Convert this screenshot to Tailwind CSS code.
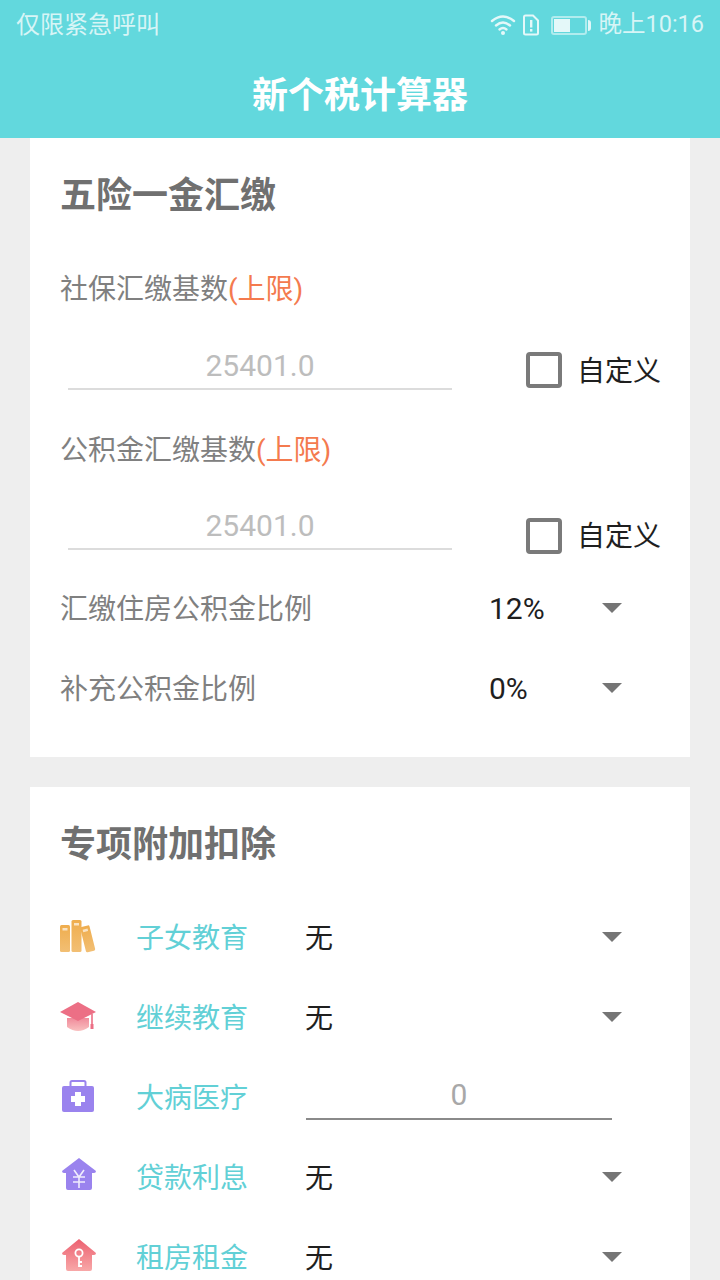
<!DOCTYPE html>
<html lang="zh">
<head>
  <meta charset="UTF-8">
  <title>新个税计算器</title>
  <script src="https://cdn.jsdelivr.net/npm/@tailwindcss/browser@4"></script>
</head>
<body class="w-[720px] h-[1280px] overflow-hidden bg-[#eeeeee] font-['Roboto','Noto_Sans_CJK_SC',sans-serif]">
  <!-- status bar + title -->
  <div class="bg-[#62d8dd] h-[138px] text-white">
    <div class="h-[50px] flex items-center justify-between pl-4 pr-4 text-[24px] text-white/75">
      <span>仅限紧急呼叫</span>
      <div class="flex items-center">
        <svg width="26" height="22" viewBox="0 0 26 22" fill="none" stroke="#e4f8f9" stroke-width="2.4" stroke-linecap="round">
          <path d="M2 7 Q13 -2 24 7"/><path d="M6 11.5 Q13 5.5 20 11.5"/><path d="M9.5 15.5 Q13 12.5 16.5 15.5"/>
          <circle cx="13" cy="19" r="2" fill="#e4f8f9" stroke="none"/>
        </svg>
        <svg class="ml-[6px]" width="18" height="22" viewBox="0 0 18 22" fill="none">
          <path d="M2 3 a1.5 1.5 0 0 1 1.5 -1.5 H11 L16 6.5 V19 a1.5 1.5 0 0 1 -1.5 1.5 H3.5 A1.5 1.5 0 0 1 2 19 Z" stroke="#e4f8f9" stroke-width="2"/>
          <rect x="8" y="6" width="2.4" height="7.5" fill="#e4f8f9"/><rect x="8" y="15" width="2.4" height="2.6" fill="#e4f8f9"/>
        </svg>
        <div class="ml-[11px] flex items-center">
          <div class="w-[36px] h-[19px] border-2 border-white/50 rounded-[3px] p-[1px]">
            <div class="w-[16px] h-full bg-[#e4f8f9]"></div>
          </div>
          <div class="w-[3px] h-[11px] bg-white/80 ml-[1px] rounded-r-sm"></div>
        </div>
        <span class="ml-[7px] text-[23.5px]">晚上10:16</span>
      </div>
    </div>
    <div class="h-[88px] flex items-center justify-center pt-[4px] text-[36px] font-bold">新个税计算器</div>
  </div>

  <div class="px-[30px]">
    <!-- card 1 -->
    <div class="bg-white h-[619px] pl-[31px] pr-[30px] pt-[34px]">
      <h2 class="h-[46px] text-[36px] leading-[48px] font-bold text-[#707070] -ml-[1px]">五险一金汇缴</h2>
      <div class="mt-[52px] h-[36px] leading-[40px] text-[28px] text-[#808080] -ml-[1px]">社保汇缴基数<span class="text-[#f47a4e]">(上限)</span></div>
      <div class="flex items-start h-[125px]">
        <div class="shrink-0 mt-[32px] ml-[7px] w-[384px] h-[52px] border-b-2 border-[#dcdcdc] text-center text-[30px] leading-[56px] text-[#bdbdbd]">25401.0</div>
        <div class="shrink-0 ml-[74px] mt-[46px] w-[36px] h-[36px] border-[4px] border-[#7a7a7a] rounded-[4px]"></div>
        <span class="ml-[15px] mt-[46px] text-[28px] leading-[40px] text-[#1f1f1f] whitespace-nowrap">自定义</span>
      </div>
      <div class="h-[36px] leading-[40px] text-[28px] text-[#808080] -ml-[1px]">公积金汇缴基数<span class="text-[#f47a4e]">(上限)</span></div>
      <div class="flex items-start h-[121px]">
        <div class="shrink-0 mt-[31px] ml-[7px] w-[384px] h-[52px] border-b-2 border-[#dcdcdc] text-center text-[30px] leading-[56px] text-[#bdbdbd]">25401.0</div>
        <div class="shrink-0 ml-[74px] mt-[51px] w-[36px] h-[36px] border-[4px] border-[#7a7a7a] rounded-[4px]"></div>
        <span class="ml-[15px] mt-[50px] text-[28px] leading-[40px] text-[#1f1f1f] whitespace-nowrap">自定义</span>
      </div>
      <div class="flex items-center h-[40px]">
        <span class="w-[428px] mt-[3px] -ml-[1px] mr-[1px] text-[28px] text-[#808080]">汇缴住房公积金比例</span>
        <span class="w-[113px] text-[30px] text-[#1f1f1f]">12%</span>
        <div class="w-0 h-0 border-x-[10px] border-x-transparent border-t-[10px] border-t-[#757575]"></div>
      </div>
      <div class="flex items-center h-[40px] mt-[40px]">
        <span class="w-[428px] mt-[3px] -ml-[1px] mr-[1px] text-[28px] text-[#808080]">补充公积金比例</span>
        <span class="w-[113px] text-[30px] text-[#1f1f1f]">0%</span>
        <div class="w-0 h-0 border-x-[10px] border-x-transparent border-t-[10px] border-t-[#757575]"></div>
      </div>
    </div>

    <!-- card 2 -->
    <div class="bg-white mt-[30px] h-[493px] pl-[31px] pr-[30px] pt-[34px]">
      <h2 class="h-[46px] text-[36px] leading-[48px] font-bold text-[#707070] -ml-[1px]">专项附加扣除</h2>
      <div class="mt-[50px] flex flex-col gap-[40px]">
        <div class="flex items-center h-[40px]">
          <svg class="w-[36px] h-[36px] shrink-0 -ml-[1px] -mt-[3px]" viewBox="0 0 36 36">
            <defs><linearGradient id="g1" x1="0" y1="0" x2="0" y2="1"><stop offset="0" stop-color="#efad4e"/><stop offset="1" stop-color="#f2bf74"/></linearGradient></defs>
            <rect x="0" y="7" width="10" height="27" rx="1.5" fill="url(#g1)"/><rect x="11.5" y="2" width="10" height="32" rx="1.5" fill="url(#g1)"/>
            <rect x="23" y="8" width="9.5" height="26" rx="1.5" fill="url(#g1)" transform="rotate(-14 27 21)"/>
            <rect x="2.5" y="10" width="5" height="2.5" fill="#fff" opacity=".65"/><rect x="14" y="5" width="5" height="2.5" fill="#fff" opacity=".65"/><rect x="25" y="11" width="5" height="2.5" fill="#fff" opacity=".65" transform="rotate(-14 27 21)"/>
          </svg>
          <span class="ml-[40px] w-[169px] mt-[3px] text-[28px] text-[#62d0d6]">子女教育</span>
          <span class="w-[297px] mt-[3px] text-[28px] text-[#1f1f1f]">无</span>
          <div class="w-0 h-0 border-x-[10px] border-x-transparent border-t-[10px] border-t-[#757575]"></div>
        </div>
        <div class="flex items-center h-[40px]">
          <svg class="w-[36px] h-[36px] shrink-0 -ml-[1px] mt-[1px]" viewBox="0 0 36 36">
            <defs><linearGradient id="g3" x1="0" y1="0" x2="0" y2="1"><stop offset="0" stop-color="#f08a9a"/><stop offset="1" stop-color="#f9c0c0"/></linearGradient></defs>
            <path d="M7 18 V27 Q18 35 29 27 V18 Z" fill="url(#g3)"/>
            <path d="M0 12 L18 2 L36 12 L18 21 Z" fill="#ec6f85"/>
            <path d="M32 14 V25" stroke="#ec6f85" stroke-width="1.6"/><rect x="30.5" y="24" width="3" height="5" fill="#ec6f85"/>
          </svg>
          <span class="ml-[40px] w-[169px] mt-[3px] text-[28px] text-[#62d0d6]">继续教育</span>
          <span class="w-[297px] mt-[3px] text-[28px] text-[#1f1f1f]">无</span>
          <div class="w-0 h-0 border-x-[10px] border-x-transparent border-t-[10px] border-t-[#757575]"></div>
        </div>
        <div class="flex items-center h-[40px]">
          <svg class="w-[34px] h-[34px] shrink-0 -mt-[2px]" viewBox="0 0 34 34">
            <path d="M9.5 7 V3.5 A1.5 1.5 0 0 1 11 2 H23 A1.5 1.5 0 0 1 24.5 3.5 V7" fill="none" stroke="#9a83ee" stroke-width="2"/>
            <rect x="1" y="7" width="32" height="26" rx="2" fill="#9a83ee"/>
            <path d="M14 13 H20 V17 H24 V23 H20 V27 H14 V23 H10 V17 H14 Z" fill="#fff"/>
          </svg>
          <span class="ml-[41px] w-[170px] mt-[3px] text-[28px] text-[#62d0d6]">大病医疗</span>
          <div class="shrink-0 self-start w-[306px] h-[43px] border-b-2 border-[#8a8a8a] text-center text-[30px] leading-[36px] text-[#a8a8a8]">0</div>
        </div>
        <div class="flex items-center h-[40px]">
          <svg class="w-[36px] h-[36px] shrink-0 -mt-[4px]" viewBox="0 0 36 36">
            <path d="M18 1 L35 14 Q35 16 33 16 H31 V31 A2 2 0 0 1 29 33 H7 A2 2 0 0 1 5 31 V16 H3 Q1 16 1 14 Z" fill="#9a83ee"/>
            <path d="M13 13 L18 20 L23 13 M12 20 H24 M12 25 H24 M18 20 V31" fill="none" stroke="#fff" stroke-width="1.6" opacity=".85"/>
          </svg>
          <span class="ml-[39px] w-[169px] mt-[3px] text-[28px] text-[#62d0d6]">贷款利息</span>
          <span class="w-[297px] mt-[3px] text-[28px] text-[#1f1f1f]">无</span>
          <div class="w-0 h-0 border-x-[10px] border-x-transparent border-t-[10px] border-t-[#757575]"></div>
        </div>
        <div class="flex items-center h-[40px]">
          <svg class="w-[36px] h-[36px] shrink-0 -mt-[2px]" viewBox="0 0 36 36">
            <defs><linearGradient id="g2" x1="0" y1="0" x2="0" y2="1"><stop offset="0" stop-color="#ec6070"/><stop offset="1" stop-color="#f8a8a8"/></linearGradient></defs>
            <path d="M18 1 L35 15 Q35 17 33 17 H31 V31 A2 2 0 0 1 29 33 H7 A2 2 0 0 1 5 31 V17 H3 Q1 17 1 15 Z" fill="url(#g2)"/>
            <circle cx="18" cy="15" r="3.6" fill="none" stroke="#fff" stroke-width="1.8"/>
            <path d="M18 19 V29 M18 24 H21 M18 28 H21" fill="none" stroke="#fff" stroke-width="1.8"/>
          </svg>
          <span class="ml-[39px] w-[169px] mt-[3px] text-[28px] text-[#62d0d6]">租房租金</span>
          <span class="w-[297px] mt-[3px] text-[28px] text-[#1f1f1f]">无</span>
          <div class="w-0 h-0 border-x-[10px] border-x-transparent border-t-[10px] border-t-[#757575]"></div>
        </div>
      </div>
    </div>
  </div>
</body>
</html>
